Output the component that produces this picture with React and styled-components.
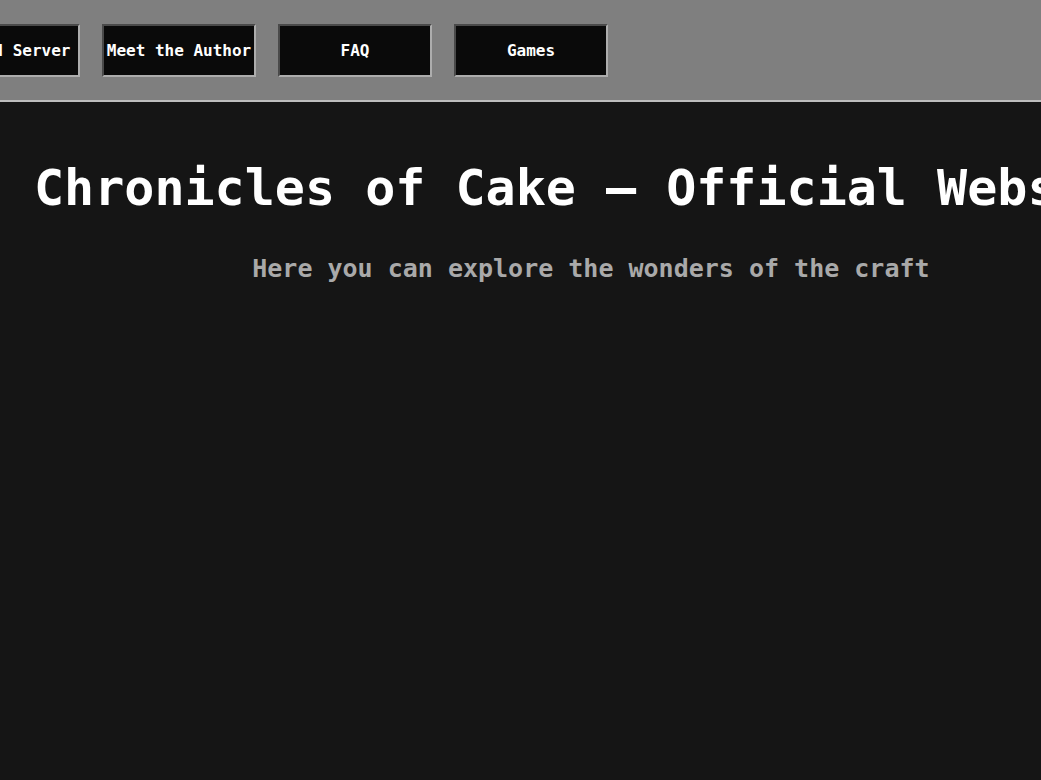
import React from 'react';
import styled, { createGlobalStyle } from "styled-components"

const links = ["Home", "Wiki", "Discord Server", "Meet the Author", "FAQ", "Games"]

function App() {
  return (
    <>
      <Global />
      <Header>
        <Nav>
          {links.map((l) => (
            <NavButton key={l}>{l}</NavButton>
          ))}
        </Nav>
      </Header>
      <Hero>
        <Title>Chronicles of Cake – Official Website</Title>
        <Tagline>Here you can explore the wonders of the craft</Tagline>
      </Hero>
    </>
  )
}

const Global = createGlobalStyle`
  html, body {
    margin: 0;
    background-color: #151515;
    overflow-x: hidden;
  }
  body {
    font-family: "DejaVu Sans Mono", "Liberation Mono", monospace;
    color: white;
  }
`
const Header = styled.header`
  height: 100px;
  background-color: #7f7f7f;
  border-bottom: 2px solid #bdbdbd;
  display: flex;
  align-items: center;
`
const Nav = styled.nav`
  width: 608px;
  display: flex;
  justify-content: flex-end;
  gap: 22px;
`
const NavButton = styled.button`
  flex: none;
  width: 154px;
  height: 53px;
  padding: 0;
  background-color: #0a0a0a;
  color: white;
  font-family: inherit;
  font-weight: bold;
  font-size: 16px;
  border: 2px solid;
  border-color: #4a4a4a #adadad #adadad #4a4a4a;
  cursor: pointer;
`
const Hero = styled.section`
  width: max-content;
  padding-left: 34px;
  text-align: center;
`
const Title = styled.h1`
  margin: 57px 0 0;
  font-size: 50px;
  line-height: normal;
  font-weight: bold;
`
const Tagline = styled.p`
  margin: 37px 0 0;
  font-size: 25px;
  font-weight: bold;
  color: #a9a9a9;
`
export default App
